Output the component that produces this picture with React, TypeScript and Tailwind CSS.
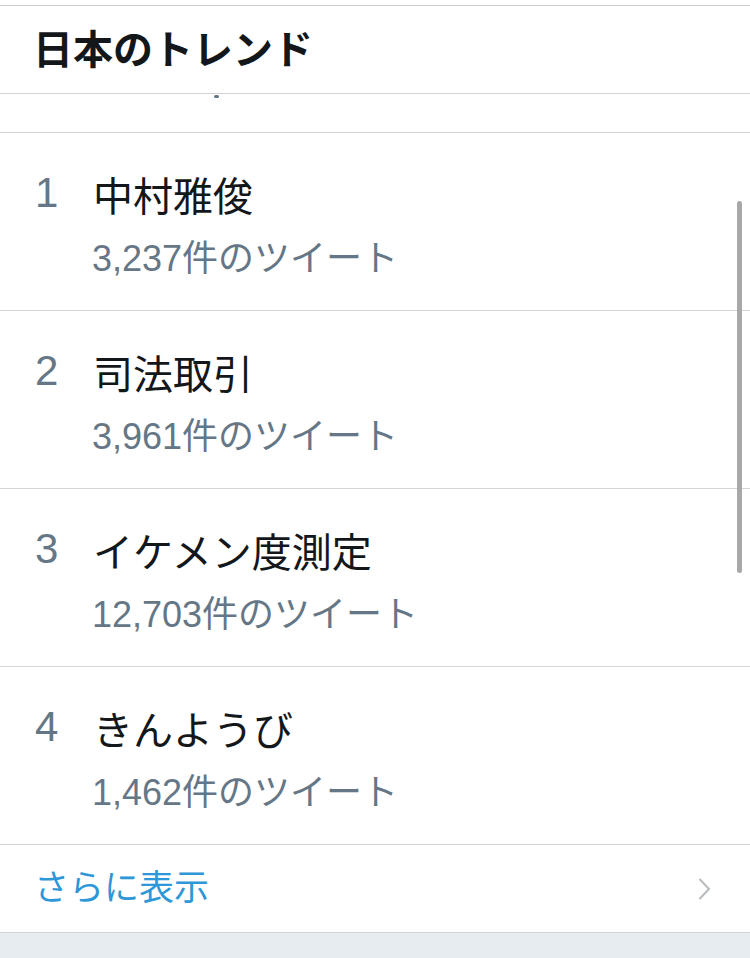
import { ReactNode } from 'react'

const trends = [
  { rank: 1, name: '中村雅俊', count: '3,237' },
  { rank: 2, name: '司法取引', count: '3,961' },
  { rank: 3, name: 'イケメン度測定', count: '12,703' },
  { rank: 4, name: 'きんようび', count: '1,462' },
]

const font = { fontFamily: '"Liberation Sans", "Noto Sans CJK JP", sans-serif' }

function Row({ children }: { children: ReactNode }) {
  return <div className="border-b border-[#d6d6d6] h-[178px]">{children}</div>
}

export default function App() {
  return (
    <div className="relative w-[750px] h-[958px] bg-[#e6ecf0] overflow-hidden" style={font}>
      <div className="bg-white">
        <div className="h-[6px] border-b border-[#cfcfcf]" />
        <div className="h-[88px] flex items-center px-[33px] border-b border-[#d3d3d3]">
          <h2 className="text-[40px] font-bold text-[#14171a] leading-none">日本のトレンド</h2>
        </div>
        <div className="h-[39px] border-b border-[#d6d6d6] relative">
          <div className="absolute left-[214px] top-[1px] w-[5px] h-[3px] rounded-sm bg-[#657786]" />
        </div>

        {trends.map((t) => (
          <Row key={t.rank}>
            <div className="flex pl-[35px] pt-[40px]">
              <div className="w-[58px] text-[42px] text-[#657786] leading-[40px]">{t.rank}</div>
              <div>
                <div className="text-[40px] text-[#14171a] leading-[48px]">{t.name}</div>
                <div className="text-[36px] text-[#657786] leading-[44px] mt-[16px] -ml-[1px]">
                  {t.count}件のツイート
                </div>
              </div>
            </div>
          </Row>
        ))}

        <div className="h-[88px] flex items-center justify-between pl-[34px] pr-[38px] border-b border-[#d3d3d3]">
          <span className="text-[35px] text-[#2e97d8]">さらに表示</span>
          <svg width="14" height="22" viewBox="0 0 14 22" fill="none">
            <path d="M2 1.5 L11 11 L2 20.5" stroke="#b8bcc0" strokeWidth="2" strokeLinecap="round" />
          </svg>
        </div>
      </div>

      <div className="absolute right-[8px] top-[201px] w-[5px] h-[372px] rounded-full bg-[#a8a8a8]" />
    </div>
  )
}
